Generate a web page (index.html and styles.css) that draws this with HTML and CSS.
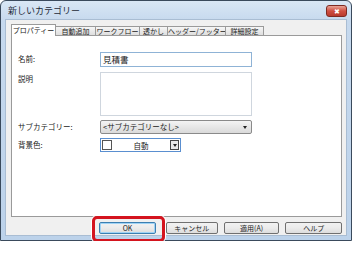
FILE: index.html
```html
<!DOCTYPE html>
<html lang="ja">
<head>
  <meta charset="UTF-8">
  <title>新しいカテゴリー</title>
  <link rel="stylesheet" href="styles.css">
</head>
<body>
  <div class="window">
    <div class="titlebar">
      <span class="title">新しいカテゴリー</span>
      <span class="close">&#x2716;</span>
    </div>
    <div class="client">
      <!-- Tabs -->
      <div class="tabs">
        <span class="tab active" style="width: 45px">プロパティー</span>
        <span class="tab" style="width: 41px">自動追加</span>
        <span class="tab" style="width: 45px">ワークフロー</span>
        <span class="tab" style="width: 29px">透かし</span>
        <span class="tab" style="width: 59px">ヘッダー/フッター</span>
        <span class="tab" style="width: 39px">詳細設定</span>
      </div>
      <div class="panel">
        <div class="row">
          <label>名前:</label>
          <div class="input">見積書</div>
        </div>
        <div class="row">
          <label>説明</label>
          <div class="textarea"></div>
        </div>
        <div class="row">
          <label>サブカテゴリー:</label>
          <div class="select">&lt;サブカテゴリーなし&gt;<span class="arrow"></span></div>
        </div>
        <div class="row">
          <label>背景色:</label>
          <div class="color">
            <span class="swatch"></span>
            <span class="color-name">自動</span>
            <span class="color-btn"><span class="arrow"></span></span>
          </div>
        </div>
      </div>
      <!-- Buttons -->
      <div class="buttons">
        <span class="highlight"><button class="btn ok">OK</button></span>
        <button class="btn cancel">キャンセル</button>
        <button class="btn apply">適用(A)</button>
        <button class="btn help">ヘルプ</button>
      </div>
    </div>
  </div>
</body>
</html>
```

FILE: styles.css
```css
*, *::before, *::after { box-sizing: border-box; }
body { margin: 0; background: #fff; font-family: "Noto Sans CJK JP", "Liberation Sans", sans-serif; font-size: 8px; color: #222; }
.window { width: 352px; height: 241px; border: 1px solid #3a4a5c; border-radius: 6px 6px 0 0; background: linear-gradient(#d9e7f5, #c6d9ee 20px, #bcd2ea); display: flex; flex-direction: column; }
.titlebar { height: 18px; display: flex; align-items: center; justify-content: space-between; padding: 0 4px 0 7px; }
.title { font-size: 9px; color: #1e2a38; }
.close { width: 21px; height: 12px; margin-top: 2px; background: linear-gradient(#e9a497, #cf4f42 50%, #b93a2e); border: 1px solid #7e2a22; border-radius: 3px; color: #fff; font-size: 7px; line-height: 10px; text-align: center; }
.client { flex: 1; margin: 0 4px 4px 4px; background: #f0f0f0; border: 1px solid #a9bdd3; display: flex; flex-direction: column; padding: 0 4px 0 5px; }
.tabs { display: flex; align-items: flex-end; height: 14px; margin-top: 1px; }
.tab { height: 9px; line-height: 8px; border: 1px solid #9a9a9a; border-bottom: none; background: linear-gradient(#f6f6f6, #dedede); font-size: 7px; text-align: center; margin-right: -1px; white-space: nowrap; overflow: hidden; }
.tab.active { height: 12px; line-height: 11px; background: #fff; position: relative; z-index: 1; margin-bottom: -1px; }
.panel { height: 182px; background: #fff; border: 1px solid #9a9a9a; padding-top: 16px; display: flex; flex-direction: column; gap: 4px; }
.row { display: flex; align-items: flex-start; }
.row label { width: 88px; padding-left: 6px; line-height: 14px; font-size: 7.5px; }
.input { width: 152px; height: 15px; border: 1px solid #8fb3d6; line-height: 13px; padding-left: 2px; font-size: 8.5px; margin-bottom: 1px; }
.textarea { width: 152px; height: 44px; border: 1px solid #cfd6de; }
.select { width: 152px; height: 14px; border: 1px solid #8a8a8a; border-radius: 2px; background: linear-gradient(#f4f4f4, #dadada); font-size: 7.5px; line-height: 12px; padding-left: 2px; position: relative; }
.arrow { position: absolute; right: 4px; top: 5px; border-left: 2px solid transparent; border-right: 2px solid transparent; border-top: 3px solid #222; }
.color { width: 81px; height: 14px; border: 1px solid #5a8fd0; display: flex; align-items: center; }
.swatch { width: 10px; height: 10px; border: 1px solid #555; margin-left: 1px; }
.color-name { flex: 1; text-align: center; font-size: 7.5px; }
.color-btn { width: 9px; height: 10px; border: 1px solid #444; background: #e8e8e8; position: relative; margin-right: 1px; }
.color-btn .arrow { right: 1px; top: 3px; }
.buttons { display: flex; padding-left: 88px; margin-top: 5px; }
.btn { height: 12px; padding: 0; border: 1px solid #707070; border-radius: 2px; background: linear-gradient(#f2f2f2, #ebebeb 50%, #dddddd); font-family: inherit; font-size: 7px; line-height: 10px; color: #222; }
.highlight { position: relative; display: flex; }
.ok { width: 57px; border-color: #3c7fb1; box-shadow: inset 0 0 0 1px #9fd3f5; }
.cancel { width: 53px; margin-left: 10px; }
.apply { width: 57px; margin-left: 6px; }
.help { width: 58px; margin-left: 6px; }
.highlight::after { content: ""; position: absolute; left: -7px; top: -6px; width: 73px; height: 26px; border: 3px solid #d4141e; border-radius: 5px; box-shadow: 0 0 0 1px #fff; }
```
